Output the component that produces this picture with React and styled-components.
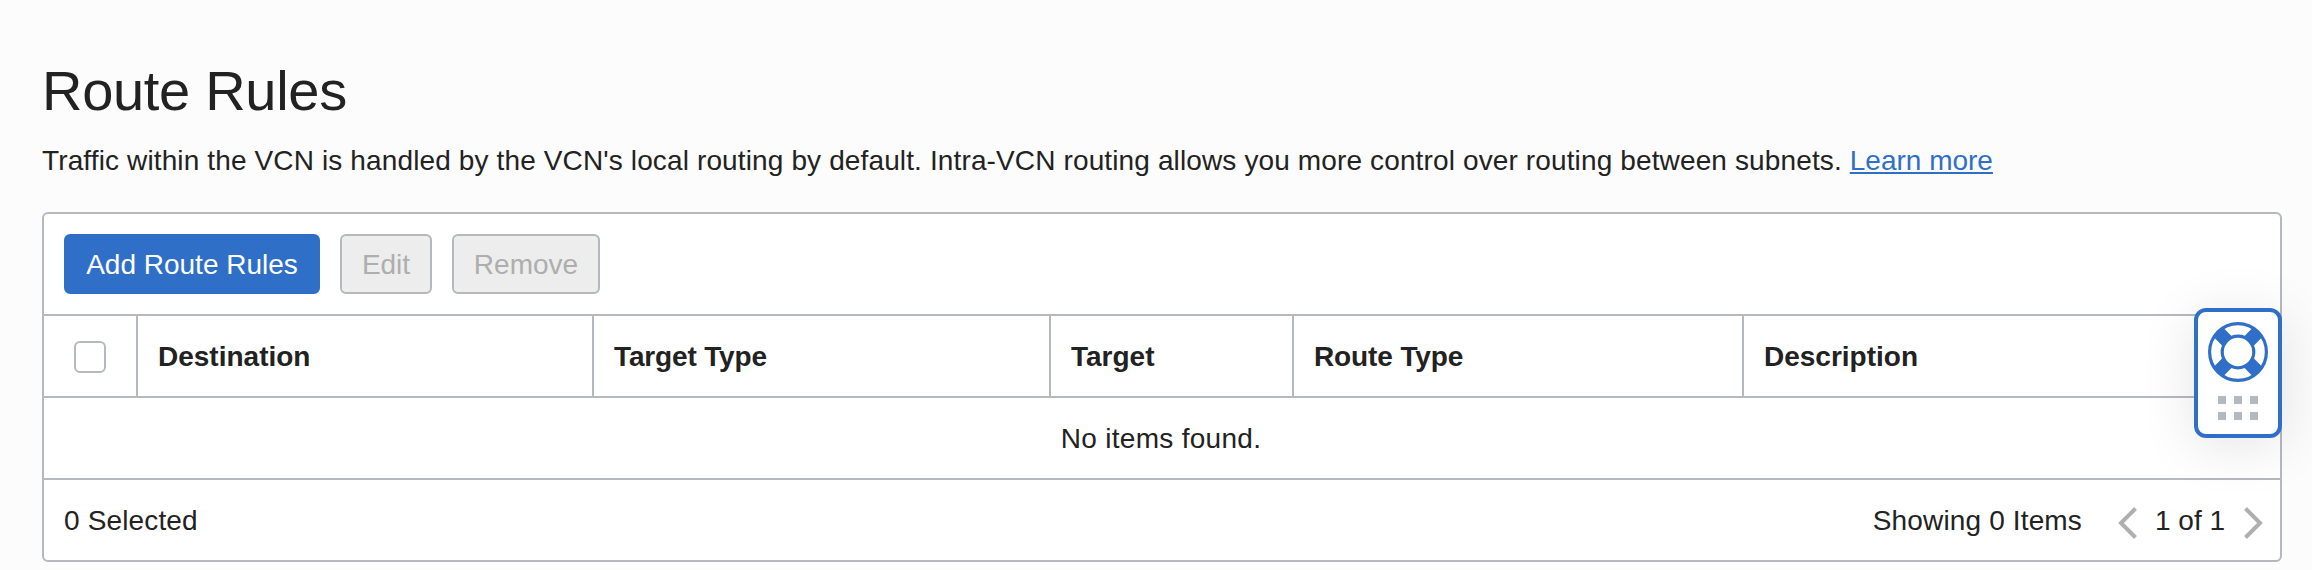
import React from "react";
import styled, { createGlobalStyle } from "styled-components";

const line = "#b4b8bf";
const blue = "#306fc8";

const GlobalStyle = createGlobalStyle`
  * { box-sizing: border-box; }
  body {
    margin: 0;
    background: #fcfcfc;
    color: #222;
    font-family: "Liberation Sans", Arial, sans-serif;
    font-size: 28px;
    line-height: 40px;
    overflow: hidden;
  }
`;

const Page = styled.main`
  position: relative;
  height: 570px;
  padding: 59px 30px 0 42px;
`;

const Title = styled.h1`
  margin: 0 0 18px;
  font-size: 56px;
  font-weight: 400;
  line-height: 64px;
  letter-spacing: -0.3px;
`;

const Intro = styled.p`
  margin: 0 0 31px;
  letter-spacing: 0.13px;
  white-space: nowrap;
`;

const Link = styled.a`
  color: ${blue};
  letter-spacing: 0;
  text-decoration: underline;
  text-decoration-thickness: 2px;
  text-underline-offset: 2px;
  text-decoration-skip-ink: none;
`;

const Panel = styled.section`
  height: 350px;
  border: 2px solid ${line};
  border-radius: 6px;
  background: #fff;
`;

const Toolbar = styled.div`
  display: flex;
  align-items: center;
  gap: 20px;
  height: 102px;
  padding: 0 20px;
  border-bottom: 2px solid ${line};
`;

const Button = styled.button`
  width: ${(p) => p.$width}px;
  height: 60px;
  padding: 2px 0 0;
  border: 2px solid ${(p) => (p.$primary ? blue : line)};
  border-radius: 6px;
  background: ${(p) => (p.$primary ? blue : "#ededed")};
  color: ${(p) => (p.$primary ? "#fff" : "#aeaeae")};
  font: inherit;
`;

const HeaderRow = styled.div`
  display: grid;
  grid-template-columns: 94px 456px 457px 243px 450px 1fr;
  height: 82px;
  border-bottom: 2px solid ${line};
`;

const HeaderCell = styled.div`
  display: flex;
  align-items: center;
  padding: 2px 0 0 20px;
  border-right: ${(p) => (p.$last ? "none" : `2px solid ${line}`)};
  font-weight: 700;
  letter-spacing: ${(p) => p.$tracking || 0}px;
`;

const CheckCell = styled(HeaderCell)`
  padding-left: 30px;
`;

const Checkbox = styled.span`
  width: 32px;
  height: 32px;
  border: 2px solid ${line};
  border-radius: 6px;
  background: #fff;
`;

const EmptyRow = styled.div`
  display: flex;
  align-items: center;
  justify-content: center;
  height: 82px;
  padding: 2px 2px 0 0;
  border-bottom: 2px solid ${line};
  letter-spacing: 0.3px;
`;

const Footer = styled.div`
  display: flex;
  align-items: center;
  justify-content: space-between;
  height: 80px;
  padding: 2px 17px 0 20px;
  letter-spacing: 0.15px;
`;

const Pager = styled.div`
  display: flex;
  align-items: center;
`;

const Count = styled.span`
  margin-right: 36px;
`;

const PageNumber = styled.span`
  width: 67px;
  margin: 0 22px 0 18px;
  letter-spacing: 0;
  white-space: nowrap;
`;

const Chevron = styled.svg`
  display: block;
  width: 19px;
  height: 32px;
  margin-top: 4px;
  fill: none;
  stroke: #afafaf;
  stroke-width: 4;
`;

const HelpWidget = styled.aside`
  position: absolute;
  top: 308px;
  right: 30px;
  display: flex;
  flex-direction: column;
  align-items: center;
  gap: 14px;
  width: 88px;
  height: 130px;
  padding-top: 10px;
  border: 4px solid ${blue};
  border-radius: 12px;
  background: #fff;
  box-shadow: 0 8px 56px rgba(0, 0, 0, 0.11);
`;

const Dots = styled.div`
  display: grid;
  grid-template-columns: repeat(3, 8px);
  gap: 8px;
`;

const Dot = styled.span`
  height: 8px;
  background: ${line};
`;

const Lifebuoy = () => (
  <svg width="60" height="60" viewBox="0 0 60 60" fill="none" stroke={blue}>
    <circle cx="30" cy="30" r="28.4" strokeWidth="3.2" />
    <circle cx="30" cy="30" r="15.8" strokeWidth="3.2" />
    <g strokeWidth="13.4">
      <path d="M41 19L49.4 10.6" />
      <path d="M41 41L49.4 49.4" />
      <path d="M19 41L10.6 49.4" />
      <path d="M19 19L10.6 10.6" />
    </g>
  </svg>
);

const columns = [
  { name: "Destination" },
  { name: "Target Type", tracking: -0.15 },
  { name: "Target" },
  { name: "Route Type", tracking: -0.12 },
  { name: "Description" },
];

export default function App() {
  return (
    <>
      <GlobalStyle />
      <Page>
        <Title>Route Rules</Title>
        <Intro>
          Traffic within the VCN is handled by the VCN's local routing by default. Intra-VCN routing
          allows you more control over routing between subnets. <Link>Learn more</Link>
        </Intro>
        <Panel>
          <Toolbar>
            <Button $primary $width={256}>Add Route Rules</Button>
            <Button $width={92} disabled>Edit</Button>
            <Button $width={148} disabled>Remove</Button>
          </Toolbar>
          <HeaderRow>
            <CheckCell><Checkbox /></CheckCell>
            {columns.map(({ name, tracking }, i) => (
              <HeaderCell key={name} $tracking={tracking} $last={i === columns.length - 1}>
                {name}
              </HeaderCell>
            ))}
          </HeaderRow>
          <EmptyRow>No items found.</EmptyRow>
          <Footer>
            <span>0 Selected</span>
            <Pager>
              <Count>Showing 0 Items</Count>
              <Chevron viewBox="0 0 19 32"><path d="M17.5 1.5L3 16L17.5 30.5" /></Chevron>
              <PageNumber>1 of 1</PageNumber>
              <Chevron viewBox="0 0 19 32"><path d="M1.5 1.5L16 16L1.5 30.5" /></Chevron>
            </Pager>
          </Footer>
        </Panel>
        <HelpWidget>
          <Lifebuoy />
          <Dots>
            {Array.from({ length: 6 }, (_, i) => <Dot key={i} />)}
          </Dots>
        </HelpWidget>
      </Page>
    </>
  );
}
